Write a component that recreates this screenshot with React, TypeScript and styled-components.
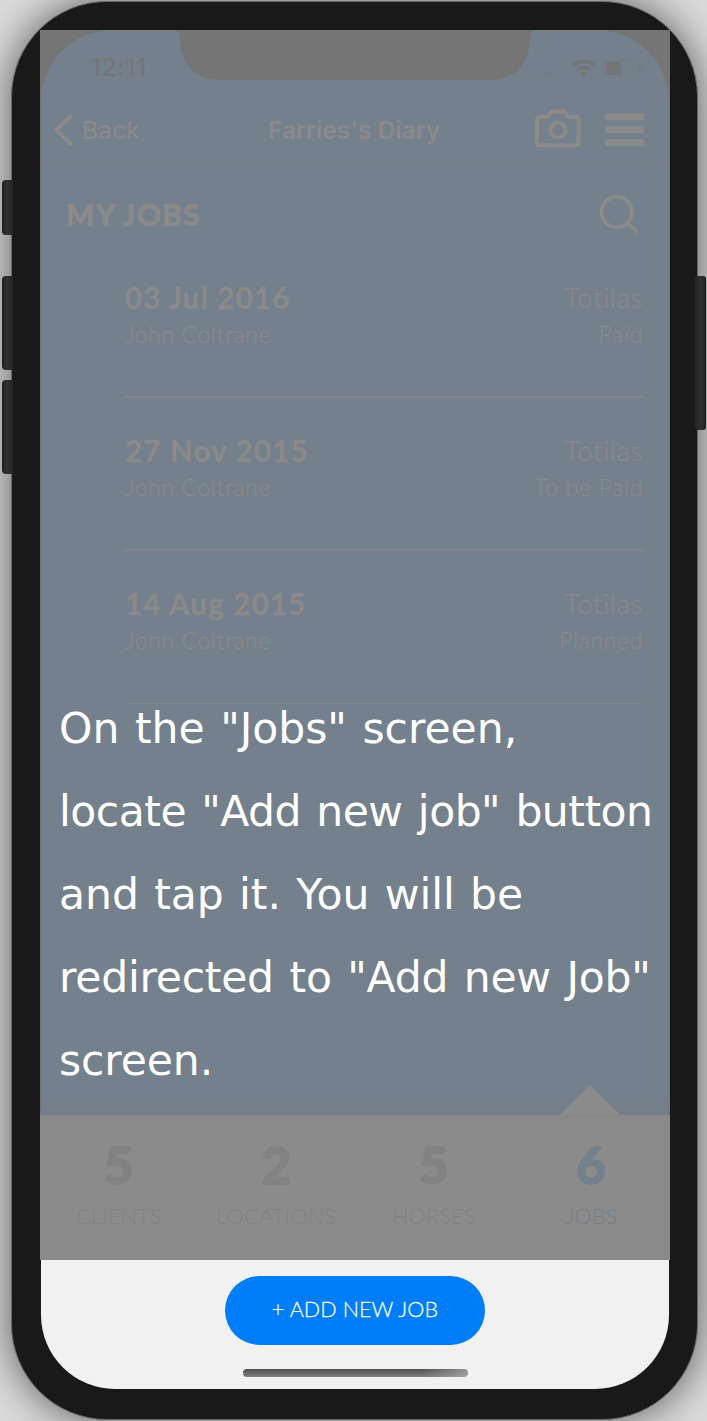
import React from 'react';
import styled, { createGlobalStyle } from 'styled-components';

const ink = '#8a8a8a';
const dim = '#757575';
const blue = '#74808c';

const Global = createGlobalStyle`
  * { box-sizing: border-box; }
  body { margin: 0; background: #dcdcdc; }
`;

const Page = styled.div`
  position: relative;
  width: 707px;
  height: 1421px;
  overflow: hidden;
  background: #dadada;
  font-family: Lato, 'Open Sans', sans-serif;
`;

const SideButton = styled.div<{ $side: 'left' | 'right'; $top: number; $height: number }>`
  position: absolute;
  ${p => p.$side}: ${p => (p.$side === 'left' ? 2 : 1)}px;
  top: ${p => p.$top}px;
  width: 11px;
  height: ${p => p.$height}px;
  z-index: 1;
  border-radius: ${p => (p.$side === 'left' ? '4px 0 0 4px' : '3px')};
  background: linear-gradient(to ${p => p.$side}, #262626, #303030 60%, #222 90%);
`;

const Phone = styled.div`
  display: flex;
  flex-direction: column;
  width: 687px;
  height: 1419px;
  margin: 1px 0 0 11px;
  padding: 28px 27px 0 28px;
  border: 1px solid #686868;
  border-radius: 96px;
  background: #191919;
  box-shadow: 0 0 42px 0 rgba(0, 0, 0, 0.6);
`;

const Dimmed = styled.div`
  position: relative;
  flex: none;
  width: 630px;
  height: 1230px;
  background: ${dim};
  color: ${ink};
`;

const Screen = styled.div`
  display: flex;
  flex-direction: column;
  height: 1085px;
  margin: 0 1px;
  border-radius: 72px 72px 0 0;
  background: linear-gradient(${blue} 0, ${blue} 1069px, #747e88 1079px, #737d87 1085px);
`;

const Notch = styled.svg`
  position: absolute;
  left: 130px;
  top: 0;
`;

const StatusBar = styled.div`
  display: flex;
  align-items: center;
  justify-content: space-between;
  height: 75px;
  padding: 0 24px 0 50px;
  color: ${dim};
`;

const Time = styled.span`
  font: 500 24px/24px Inter, sans-serif;
  letter-spacing: 0.8px;
`;

const NavBar = styled.div`
  display: grid;
  grid-template-columns: 215px auto 1fr;
  align-items: center;
  height: 59px;
  padding: 0 24px 8px 12px;
  border-bottom: 1px solid #78808a;
  font: 400 24.5px/30px Inter, sans-serif;
`;

const BackLink = styled.div`
  display: flex;
  align-items: center;
  gap: 8px;
  letter-spacing: 0.2px;
`;

const NavTitle = styled.div`
  font-weight: 600;
`;

const NavActions = styled.div`
  display: flex;
  align-items: center;
  justify-content: flex-end;
  gap: 24px;
`;

const ListHeader = styled.div`
  display: flex;
  align-items: center;
  justify-content: space-between;
  height: 80.7px;
  padding: 20px 30.5px 0 25px;
`;

const Heading = styled.h1`
  margin: 0;
  font-size: 30px;
  line-height: 40px;
  font-weight: 900;
  letter-spacing: 1.1px;
  -webkit-text-stroke: 0.7px ${ink};
`;

const JobRow = styled.div<{ $rule: number }>`
  display: flex;
  justify-content: space-between;
  height: 153.2px;
  margin: 0 26px 0 84px;
  padding-top: 35.4px;
  box-shadow: 1px 0 0 transparent;
  border-bottom: ${p => p.$rule}px solid #82868a;
  line-height: 36px;
`;

const JobSide = styled.div<{ $end?: boolean }>`
  display: flex;
  flex-direction: column;
  align-items: ${p => (p.$end ? 'flex-end' : 'flex-start')};
`;

const JobDate = styled.div`
  font-size: 29.5px;
  font-weight: 700;
  letter-spacing: 1.2px;
  -webkit-text-stroke: 0.3px ${ink};
`;

const JobHorse = styled.div`
  font-size: 27px;
  font-weight: 300;
  letter-spacing: 0.8px;
  -webkit-text-stroke: 0.2px ${ink};
`;

const JobDetail = styled.div<{ $spacing: number }>`
  font-size: 23px;
  font-weight: 300;
  letter-spacing: ${p => p.$spacing}px;
  -webkit-text-stroke: 0.2px ${ink};
`;

const TabBar = styled.div`
  position: relative;
  display: grid;
  grid-template-columns: repeat(4, 1fr);
  height: 145px;
  padding: 19px 0 0;
  background: linear-gradient(#878787, #8b8b8b 6px);
`;

const TabPointer = styled.svg`
  position: absolute;
  left: 519px;
  top: -30px;
`;

const Tab = styled.div<{ $active?: boolean }>`
  display: flex;
  flex-direction: column;
  align-items: center;
  color: ${p => (p.$active ? blue : '#828282')};
`;

const TabCount = styled.div`
  font-size: 51.5px;
  line-height: 60px;
  font-weight: 900;
  -webkit-text-stroke: 1.6px currentColor;
`;

const TabLabel = styled.div`
  font-size: 22px;
  line-height: 44px;
  font-weight: 300;
`;

const Hint = styled.p`
  position: absolute;
  left: 19px;
  top: 657px;
  margin: 0;
  color: #fff;
  font: 400 42.5px/83px 'DejaVu Sans', Verdana, sans-serif;
  white-space: nowrap;
`;

const HintLine = styled.span<{ $spacing: number; $words: number }>`
  display: block;
  letter-spacing: ${p => p.$spacing}px;
  word-spacing: ${p => p.$words}px;
`;

const Footer = styled.div`
  display: flex;
  flex-direction: column;
  align-items: center;
  flex: none;
  height: 129px;
  margin: 0 1px;
  padding-top: 16px;
  border-radius: 0 0 74px 74px;
  background: #f1f1f1;
`;

const AddButton = styled.button`
  width: 260px;
  height: 69px;
  padding: 0 0 4px;
  border: 0;
  border-radius: 35px;
  background: #007df9;
  color: #f4f9ff;
  font: 300 21.5px/30px Lato, sans-serif;
  letter-spacing: 0.1px;
  -webkit-text-stroke: 0.3px #f4f9ff;
`;

const HomeIndicator = styled.div`
  width: 225px;
  height: 8px;
  margin-top: 24px;
  border-radius: 4px;
  background: linear-gradient(to right, transparent 80%, rgba(190, 190, 190, 0.6)),
    linear-gradient(#505050, #7e7e7e);
`;

const StatusIcons = () => (
  <svg width="110" height="24" viewBox="535 55.5 110 24" fill="none">
    <g fill="#737e89">
      <circle cx="538.5" cy="73.3" r="2.6" />
      <circle cx="546.5" cy="73.3" r="2.6" />
      <circle cx="554.3" cy="73.3" r="2.6" />
      <circle cx="562" cy="73.3" r="2.6" />
    </g>
    <g stroke={dim} strokeWidth="3.6">
      <path d="M573 64.6c6-5.2 15.2-5.2 21.2 0" />
      <path d="M577.2 69.3c3.8-3.1 9-3.1 12.8 0" />
    </g>
    <path d="M583.6 76.6l-4-4.1c2.4-1.9 5.6-1.9 8 0z" fill={dim} />
    <rect x="604.3" y="59.2" width="34.6" height="17.4" rx="4" stroke="#757c83" strokeWidth="1.5" />
    <rect x="606.3" y="61.2" width="15" height="13.2" rx="1.6" fill={dim} />
    <path d="M641.3 64.6c2.6 1 2.6 5.6 0 6.6z" fill="#757c83" />
  </svg>
);

const ChevronIcon = () => (
  <svg width="21" height="32" viewBox="53 113.5 21 32" fill="none" stroke={ink} strokeWidth="4" strokeLinecap="round">
    <path d="M70.3 116.2L56.5 129.5L70.3 143" strokeLinejoin="miter" />
  </svg>
);

const CameraIcon = () => (
  <svg width="46" height="42" viewBox="535.3 109 46 42" fill="none" stroke={ink} strokeWidth="4" strokeLinejoin="round">
    <path d="M540.3 116.9h6.4c1 0 1.7-.4 2.2-1.1l2-3.2c.4-.8 1-1.2 1.9-1.2h10.8c.9 0 1.5.4 1.9 1.2l2 3.2c.5.7 1.2 1.1 2.2 1.1h6.4c1.7 0 2.9 1.1 2.9 2.8v22.8c0 1.7-1.2 2.8-2.9 2.8h-35.8c-1.7 0-2.9-1.1-2.9-2.8v-22.8c0-1.7 1.2-2.8 2.9-2.8z" />
    <circle cx="558.2" cy="130.2" r="7.6" />
  </svg>
);

const MenuIcon = () => (
  <svg width="40" height="34" viewBox="605 112.8 40 34" fill={ink}>
    <rect x="605" y="113" width="39.5" height="7" rx="2" />
    <rect x="605" y="126" width="39.5" height="7" rx="2" />
    <rect x="605" y="139" width="39.5" height="7" rx="2" />
  </svg>
);

const SearchIcon = () => (
  <svg width="40" height="40" viewBox="598.5 194.8 40 40" fill="none" stroke={ink} strokeWidth="3.8" strokeLinecap="round">
    <circle cx="616.2" cy="212.8" r="15.2" />
    <path d="M627.5 224.5l8 7.5" />
  </svg>
);

const jobs = [
  { date: '03 Jul 2016', client: 'John Coltrane', horse: 'Totilas', status: 'Paid' },
  { date: '27 Nov 2015', client: 'John Coltrane', horse: 'Totilas', status: 'To be Paid' },
  { date: '14 Aug 2015', client: 'John Coltrane', horse: 'Totilas', status: 'Planned' },
];

const tabs = [
  { count: 5, label: 'CLIENTS' },
  { count: 2, label: 'LOCATIONS' },
  { count: 5, label: 'HORSES' },
  { count: 6, label: 'JOBS', active: true },
];

const hint = [
  { text: 'On the "Jobs" screen,', spacing: 0, words: 2 },
  { text: 'locate "Add new job" button', spacing: -0.5, words: 2.2 },
  { text: 'and tap it. You will be', spacing: 0, words: 1.7 },
  { text: 'redirected to "Add new Job"', spacing: -0.25, words: 2.4 },
  { text: 'screen.', spacing: -0.1, words: 0 },
];

export default function App() {
  return (
    <Page>
      <Global />
      <SideButton $side="left" $top={180} $height={55} />
      <SideButton $side="left" $top={276} $height={94} />
      <SideButton $side="left" $top={380} $height={94} />
      <SideButton $side="right" $top={276} $height={154} />
      <Phone>
        <Dimmed>
          <Screen>
            <StatusBar>
              <Time>12:11</Time>
              <StatusIcons />
            </StatusBar>
            <NavBar>
              <BackLink>
                <ChevronIcon />
                Back
              </BackLink>
              <NavTitle>Farries's Diary</NavTitle>
              <NavActions>
                <CameraIcon />
                <MenuIcon />
              </NavActions>
            </NavBar>
            <ListHeader>
              <Heading>MY JOBS</Heading>
              <SearchIcon />
            </ListHeader>
            {jobs.map((job, i) => (
              <JobRow key={job.date} $rule={i === jobs.length - 1 ? 1 : 2}>
                <JobSide>
                  <JobDate>{job.date}</JobDate>
                  <JobDetail $spacing={0.6}>{job.client}</JobDetail>
                </JobSide>
                <JobSide $end>
                  <JobHorse>{job.horse}</JobHorse>
                  <JobDetail $spacing={0.65}>{job.status}</JobDetail>
                </JobSide>
              </JobRow>
            ))}
          </Screen>
          <TabBar>
            <TabPointer width="62" height="30" viewBox="0 0 62 30">
              <path d="M31 0L61.5 30H.5z" fill="#8b8b8b" />
            </TabPointer>
            {tabs.map(tab => (
              <Tab key={tab.label} $active={tab.active}>
                <TabCount>{tab.count}</TabCount>
                <TabLabel>{tab.label}</TabLabel>
              </Tab>
            ))}
          </TabBar>
          <Notch width="370" height="50" viewBox="170 0 370 50">
            <path
              d="M172 0C178.500 0 180 3 180 9C180.500 33 195 50 219 50H491C515 50 529.500 33 530 9C530 3 531.500 0 538 0Z"
              fill={dim}
            />
          </Notch>
          <Hint>
            {hint.map(line => (
              <HintLine key={line.text} $spacing={line.spacing} $words={line.words}>
                {line.text}
              </HintLine>
            ))}
          </Hint>
        </Dimmed>
        <Footer>
          <AddButton>+ ADD NEW JOB</AddButton>
          <HomeIndicator />
        </Footer>
      </Phone>
    </Page>
  );
}
